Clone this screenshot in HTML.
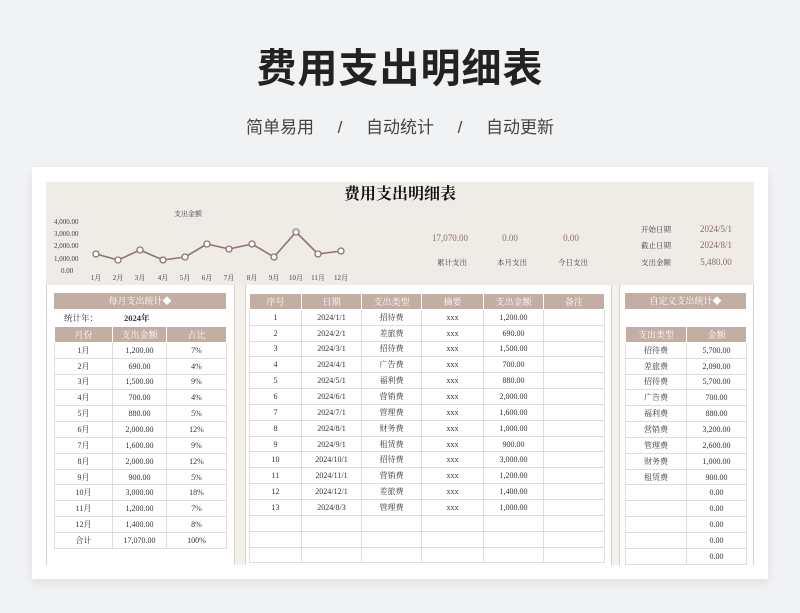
<!DOCTYPE html>
<html><head><meta charset="utf-8"><style>
*{margin:0;padding:0;box-sizing:border-box}
body{width:800px;height:613px;background:#f1f2f4;font-family:"Liberation Serif","Noto Serif CJK SC",serif;position:relative;overflow:hidden;color:#333}
.abs{position:absolute}
h1{position:absolute;top:36px;left:0;width:800px;text-align:center;font:bold 40px "Liberation Sans","Noto Sans CJK SC",sans-serif;color:#222;letter-spacing:1px}
.sub{position:absolute;top:113px;left:0;width:800px;text-align:center;font:17px "Liberation Sans","Noto Sans CJK SC",sans-serif;color:#444;word-spacing:0}
.card{left:32px;top:167px;width:736px;height:412px;background:#fff;box-shadow:0 4px 10px rgba(0,0,0,.08)}
.band{left:46px;top:182px;width:708px;height:103px;background:#efebe6}
table{position:absolute;border-collapse:collapse;font-size:8px;table-layout:fixed}
td{border:1px solid #ddd;text-align:center;height:15.85px;padding:0;white-space:nowrap;overflow:hidden}
td.h{background:#c2aea2;color:#fff;border-color:#fff;font-size:9px}
.t{font-size:8px;color:#444}
</style></head><body>
<h1>费用支出明细表</h1>
<div class="sub">简单易用&nbsp;&nbsp;&nbsp;&nbsp;&nbsp;/&nbsp;&nbsp;&nbsp;&nbsp;&nbsp;自动统计&nbsp;&nbsp;&nbsp;&nbsp;&nbsp;/&nbsp;&nbsp;&nbsp;&nbsp;&nbsp;自动更新</div>
<div class="abs card"></div>
<div class="abs band"></div>
<div class="abs" style="left:0;width:800px;top:181px;text-align:center;font-weight:bold;font-size:16px;color:#111">费用支出明细表</div>
<div class="abs t" style="left:174px;top:209px;font-size:7px">支出金额</div>
<div class="abs t" style="left:54px;top:216px;line-height:12.2px;font-size:7px">4,000.00<br>3,000.00<br>2,000.00<br>1,000.00<br>&nbsp;&nbsp;&nbsp;&nbsp;0.00</div>
<svg class="abs" style="left:0;top:0" width="800" height="300">
<polyline fill="none" stroke="#8d766a" stroke-width="1.6" stroke-linejoin="round" points="96,254 118,260 140,250 163,260 185,257 207,244 229,249 252,244 274,257 296,232 318,254 341,251"/>
<g fill="#fff" stroke="#8d766a" stroke-width="1.3">
<circle cx="96" cy="254" r="3"/><circle cx="118" cy="260" r="3"/><circle cx="140" cy="250" r="3"/><circle cx="163" cy="260" r="3"/><circle cx="185" cy="257" r="3"/><circle cx="207" cy="244" r="3"/><circle cx="229" cy="249" r="3"/><circle cx="252" cy="244" r="3"/><circle cx="274" cy="257" r="3"/><circle cx="296" cy="232" r="3"/><circle cx="318" cy="254" r="3"/><circle cx="341" cy="251" r="3"/></g>
<g font-size="7" fill="#444" text-anchor="middle" font-family="Liberation Serif,Noto Serif CJK SC,serif">
<text x="96" y="280">1月</text><text x="118" y="280">2月</text><text x="140" y="280">3月</text><text x="163" y="280">4月</text><text x="185" y="280">5月</text><text x="207" y="280">6月</text><text x="229" y="280">7月</text><text x="252" y="280">8月</text><text x="274" y="280">9月</text><text x="296" y="280">10月</text><text x="318" y="280">11月</text><text x="341" y="280">12月</text></g>
<g font-size="9" fill="#8a6f60" text-anchor="middle" font-family="Liberation Serif,Noto Serif CJK SC,serif">
<text x="450" y="241">17,070.00</text><text x="510" y="241">0.00</text><text x="571" y="241">0.00</text></g>
<g font-size="7.5" fill="#444" text-anchor="middle" font-family="Liberation Serif,Noto Serif CJK SC,serif">
<text x="452" y="265">累计支出</text><text x="512" y="265">本月支出</text><text x="573" y="265">今日支出</text>
<text x="656" y="232">开始日期</text><text x="656" y="248">截止日期</text><text x="656" y="265">支出金额</text></g>
<g font-size="9" fill="#8a6f60" text-anchor="middle" font-family="Liberation Serif,Noto Serif CJK SC,serif">
<text x="716" y="232">2024/5/1</text><text x="716" y="248">2024/8/1</text><text x="716" y="265">5,480.00</text></g>
</svg>
<!-- panel separators -->
<div class="abs" style="left:46px;top:285px;width:1px;height:280px;background:#d9cfc6"></div>
<div class="abs" style="left:234px;top:285px;width:12px;height:280px;background:#f4f0ec;border-left:1px solid #d9cfc6;border-right:1px solid #d9cfc6"></div>
<div class="abs" style="left:611px;top:285px;width:9px;height:280px;background:#f4f0ec;border-left:1px solid #d9cfc6;border-right:1px solid #d9cfc6"></div>
<div class="abs" style="left:753px;top:285px;width:1px;height:280px;background:#d9cfc6"></div>
<div class="abs" style="left:54px;top:293px;width:172px;height:16px;background:#c2aea2;color:#fff;font-size:9px;text-align:center;line-height:16px">每月支出统计◆</div>
<div class="abs" style="left:64px;top:312px;font-size:8.5px">统计年：</div>
<div class="abs" style="left:124px;top:312px;font-size:8.5px;font-weight:bold">2024年</div>
<table style="left:54px;top:326px;width:172px">
<colgroup><col style="width:58px"><col style="width:54px"><col style="width:60px"></colgroup>
<tr><td class="h">月份</td><td class="h">支出金额</td><td class="h">占比</td></tr>
<tr><td>1月</td><td>1,200.00</td><td>7%</td></tr>
<tr><td>2月</td><td>690.00</td><td>4%</td></tr>
<tr><td>3月</td><td>1,500.00</td><td>9%</td></tr>
<tr><td>4月</td><td>700.00</td><td>4%</td></tr>
<tr><td>5月</td><td>880.00</td><td>5%</td></tr>
<tr><td>6月</td><td>2,000.00</td><td>12%</td></tr>
<tr><td>7月</td><td>1,600.00</td><td>9%</td></tr>
<tr><td>8月</td><td>2,000.00</td><td>12%</td></tr>
<tr><td>9月</td><td>900.00</td><td>5%</td></tr>
<tr><td>10月</td><td>3,000.00</td><td>18%</td></tr>
<tr><td>11月</td><td>1,200.00</td><td>7%</td></tr>
<tr><td>12月</td><td>1,400.00</td><td>8%</td></tr>
<tr><td>合计</td><td>17,070.00</td><td>100%</td></tr>
</table>
<table style="left:249px;top:293px;width:355px">
<colgroup><col style="width:52px"><col style="width:60px"><col style="width:60px"><col style="width:62px"><col style="width:60px"><col style="width:61px"></colgroup>
<tr><td class="h">序号</td><td class="h">日期</td><td class="h">支出类型</td><td class="h">摘要</td><td class="h">支出金额</td><td class="h">备注</td></tr>
<tr><td>1</td><td>2024/1/1</td><td>招待费</td><td>xxx</td><td>1,200.00</td><td></td></tr>
<tr><td>2</td><td>2024/2/1</td><td>差旅费</td><td>xxx</td><td>690.00</td><td></td></tr>
<tr><td>3</td><td>2024/3/1</td><td>招待费</td><td>xxx</td><td>1,500.00</td><td></td></tr>
<tr><td>4</td><td>2024/4/1</td><td>广告费</td><td>xxx</td><td>700.00</td><td></td></tr>
<tr><td>5</td><td>2024/5/1</td><td>福利费</td><td>xxx</td><td>880.00</td><td></td></tr>
<tr><td>6</td><td>2024/6/1</td><td>营销费</td><td>xxx</td><td>2,000.00</td><td></td></tr>
<tr><td>7</td><td>2024/7/1</td><td>管理费</td><td>xxx</td><td>1,600.00</td><td></td></tr>
<tr><td>8</td><td>2024/8/1</td><td>财务费</td><td>xxx</td><td>1,000.00</td><td></td></tr>
<tr><td>9</td><td>2024/9/1</td><td>租赁费</td><td>xxx</td><td>900.00</td><td></td></tr>
<tr><td>10</td><td>2024/10/1</td><td>招待费</td><td>xxx</td><td>3,000.00</td><td></td></tr>
<tr><td>11</td><td>2024/11/1</td><td>营销费</td><td>xxx</td><td>1,200.00</td><td></td></tr>
<tr><td>12</td><td>2024/12/1</td><td>差旅费</td><td>xxx</td><td>1,400.00</td><td></td></tr>
<tr><td>13</td><td>2024/8/3</td><td>管理费</td><td>xxx</td><td>1,000.00</td><td></td></tr>
<tr><td></td><td></td><td></td><td></td><td></td><td></td></tr>
<tr><td></td><td></td><td></td><td></td><td></td><td></td></tr>
<tr><td></td><td></td><td></td><td></td><td></td><td></td></tr>
</table>
<div class="abs" style="left:625px;top:293px;width:121px;height:16px;background:#c2aea2;color:#fff;font-size:9px;text-align:center;line-height:16px">自定义支出统计◆</div>
<table style="left:625px;top:326px;width:121px">
<colgroup><col style="width:61px"><col style="width:60px"></colgroup>
<tr><td class="h">支出类型</td><td class="h">金额</td></tr>
<tr><td>招待费</td><td>5,700.00</td></tr>
<tr><td>差旅费</td><td>2,090.00</td></tr>
<tr><td>招待费</td><td>5,700.00</td></tr>
<tr><td>广告费</td><td>700.00</td></tr>
<tr><td>福利费</td><td>880.00</td></tr>
<tr><td>营销费</td><td>3,200.00</td></tr>
<tr><td>管理费</td><td>2,600.00</td></tr>
<tr><td>财务费</td><td>1,000.00</td></tr>
<tr><td>租赁费</td><td>900.00</td></tr>
<tr><td></td><td>0.00</td></tr>
<tr><td></td><td>0.00</td></tr>
<tr><td></td><td>0.00</td></tr>
<tr><td></td><td>0.00</td></tr>
<tr><td></td><td>0.00</td></tr>
</table>
</body></html>
